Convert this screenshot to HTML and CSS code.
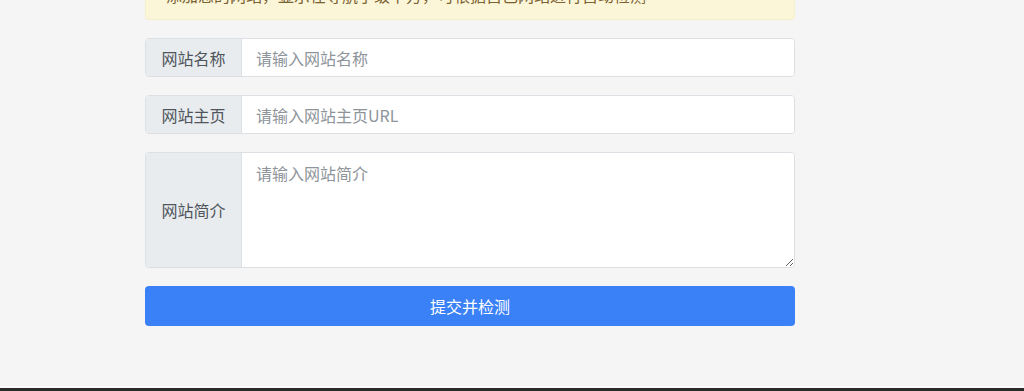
FILE: index.html
```html
<html lang="zh-CN">

<head>
	<title>提交网站</title>
	<meta charset="utf-8">
	<meta name="viewport" content="width=device-width, initial-scale=1.0">
	<link rel="stylesheet" href="styles.css">
</head>

<body>
	<div class="frame">
		<div class="page">
			<div class="alert">添加您的网站，显示在导航子级下方，可根据自己网站进行自动检测</div>

			<form class="submit-form">
				<div class="input-group">
					<span class="label">网站名称</span>
					<input class="field" type="text" placeholder="请输入网站名称">
				</div>

				<div class="input-group">
					<span class="label">网站主页</span>
					<input class="field" type="text" placeholder="请输入网站主页URL">
				</div>

				<div class="input-group tall">
					<span class="label">网站简介</span>
					<textarea class="field" placeholder="请输入网站简介"></textarea>
				</div>

				<button class="btn" type="button">提交并检测</button>
			</form>
		</div>

		<div class="edge"></div>
	</div>
</body>
</html>
```

FILE: styles.css
```css
html, body {
	padding: 0;
	margin: 0;
	background: #f5f5f5;
	font-family: "Noto Sans CJK SC", "Noto Sans", sans-serif;
	font-size: 16px;
	color: #495057;
	overflow: hidden;
}

*, *:before, *:after {
	box-sizing: border-box;
}

.frame {
	display: flex;
	flex-direction: column;
	height: 391px;
}

.page {
	width: 650px;
	margin: -27px 0 0 145px;
	flex-grow: 1;
}

.alert {
	background: #fcf6d9;
	border: 1px solid #f7efc9;
	border-radius: 4px;
	color: #7a6232;
	padding: 11px 20px 14px;
	line-height: 20px;
	margin-bottom: 18px;
}

.submit-form {
	display: flex;
	flex-direction: column;
	gap: 18px;
}

.input-group {
	display: flex;
	height: 39px;
	border: 1px solid #dcdfe3;
	border-radius: 4px;
	overflow: hidden;
	background: #fff;
}

.input-group.tall {
	height: 116px;
}

.input-group .label {
	display: flex;
	align-items: center;
	justify-content: center;
	width: 96px;
	flex-shrink: 0;
	background: #e9ecef;
	border-right: 1px solid #dcdfe3;
	color: #4f555b;
}

.input-group .field {
	flex-grow: 1;
	border: none;
	outline: none;
	padding: 0 14px;
	font-family: inherit;
	font-size: 16px;
	color: #495057;
	background: #fff;
}

.input-group textarea.field {
	padding: 8px 14px;
	line-height: 24px;
	resize: vertical;
}

.field::placeholder {
	color: #8e949a;
}

.btn {
	height: 40px;
	border: none;
	border-radius: 4px;
	background: #3a80f7;
	color: #fff;
	font-family: inherit;
	font-size: 16px;
}

.edge {
	height: 5px;
	border-top: 2px solid #fbfbfb;
	background: #2b2b2b;
	flex-shrink: 0;
}
```
